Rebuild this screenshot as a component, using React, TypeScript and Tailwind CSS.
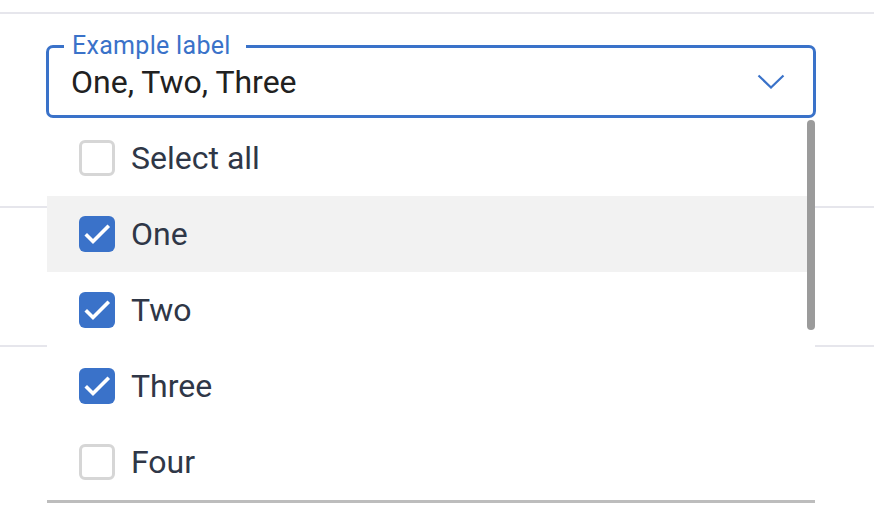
import React from "react";

const BLUE = "#3a72c9";

type Option = { label: string; checked: boolean; active?: boolean };

const options: Option[] = [
  { label: "Select all", checked: false },
  { label: "One", checked: true, active: true },
  { label: "Two", checked: true },
  { label: "Three", checked: true },
  { label: "Four", checked: false },
];

function Checkbox({ checked }: { checked: boolean }) {
  if (!checked) {
    return <span className="block h-[36px] w-[36px] shrink-0 rounded-[6px] border-[3px] border-[#d6d6d6] bg-white" />;
  }
  return (
    <span className="flex h-[36px] w-[36px] shrink-0 items-center justify-center rounded-[6px] bg-[#3a72c9]">
      <svg width="36" height="36" viewBox="0 0 36 36" fill="none">
        <polyline points="8,19.5 14,25.5 28.5,11" stroke="white" strokeWidth="3.6" strokeLinecap="square" strokeLinejoin="miter" />
      </svg>
    </span>
  );
}

function Chevron() {
  return (
    <svg width="28" height="15" viewBox="0 0 28 15" fill="none">
      <polyline points="1.5,1.5 14,13.5 26.5,1.5" stroke={BLUE} strokeWidth="2.2" />
    </svg>
  );
}

export default function App() {
  return (
    <div className="relative h-[524px] w-[874px] overflow-hidden bg-white font-['Roboto',sans-serif]">
      {/* rows behind the open menu */}
      <div className="pt-3">
        <div className="h-[194px] border-t-2 border-[#e6e6ec]">
          <fieldset className="ml-[46px] mt-[20px] w-[770px] rounded-[7px] border-[3px] border-[#3a72c9]">
            <legend className="ml-[15px] pl-[8px] pr-[15px] text-[25px] leading-[24px] tracking-[0.3px] text-[#3a72c9]">Example label</legend>
            <div className="flex h-[57px] items-start justify-between pl-[22px] pr-[28px] pt-[6px]">
              <span className="text-[32px] leading-[36px] text-[#212121]">One, Two, Three</span>
              <div className="-mt-px flex h-[36px] items-center">
                <Chevron />
              </div>
            </div>
          </fieldset>
        </div>
        <div className="h-[139px] border-t-2 border-[#e6e6ec]" />
        <div className="h-[160px] border-t-2 border-[#e6e6ec]" />
      </div>

      {/* open menu */}
      <div className="absolute left-[47px] top-[118px] w-[768px] border-b-[3px] border-[#bdbdbd] bg-white pt-[2px]">
        <ul>
          {options.map((o) => (
            <li
              key={o.label}
              className={`flex h-[76px] items-center gap-[16px] pl-[32px] ${o.active ? "bg-[#f2f2f2]" : ""}`}
            >
              <Checkbox checked={o.checked} />
              <span className="text-[32px] leading-none text-[#2f3747]">{o.label}</span>
            </li>
          ))}
        </ul>
        <div className="absolute right-0 top-[2px] h-[210px] w-[8px] rounded-full bg-[#9b9b9b]" />
      </div>
    </div>
  );
}
